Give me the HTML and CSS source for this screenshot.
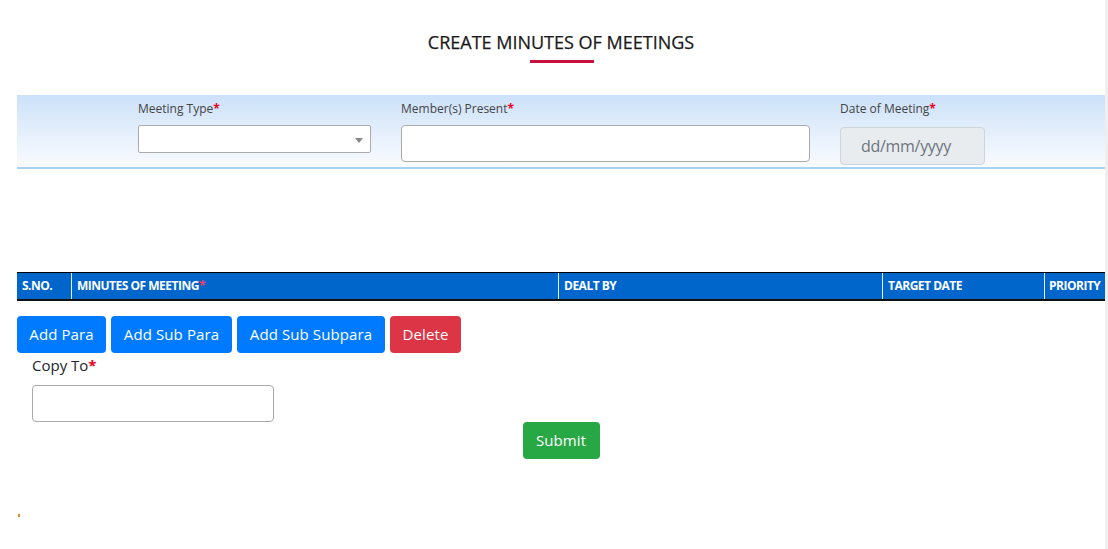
FILE: index.html
```html
<!DOCTYPE html>
<html>
<head>
<meta charset="utf-8">
<link rel="stylesheet" href="styles.css">
</head>
<body>
<div class="page">
  <div class="content">
    <div class="title-wrap">
      <h1 class="title">CREATE MINUTES OF MEETINGS</h1>
      <div class="title-bar"></div>
    </div>

    <div class="filter-panel">
      <div class="field field-type">
        <label class="flabel">Meeting Type<span class="req">*</span></label>
        <div class="select-box"><span class="caret"></span></div>
      </div>
      <div class="field field-members">
        <label class="flabel">Member(s) Present<span class="req">*</span></label>
        <div class="text-box"></div>
      </div>
      <div class="field field-date">
        <label class="flabel">Date of Meeting<span class="req">*</span></label>
        <div class="date-box">dd/mm/yyyy</div>
      </div>
    </div>

    <div class="table-head">
      <div class="th th-sno">S.NO.</div>
      <div class="th th-min">MINUTES OF MEETING<span class="req2">*</span></div>
      <div class="th th-dealt">DEALT BY</div>
      <div class="th th-date">TARGET DATE</div>
      <div class="th th-pri">PRIORITY</div>
    </div>

    <div class="btn-row">
      <button class="btn btn-blue">Add Para</button>
      <button class="btn btn-blue">Add Sub Para</button>
      <button class="btn btn-blue">Add Sub Subpara</button>
      <button class="btn btn-red">Delete</button>
    </div>

    <div class="copy">
      <label class="copy-label">Copy To<span class="req">*</span></label>
      <div class="copy-input"></div>
    </div>

    <div class="submit-row">
      <button class="btn btn-green">Submit</button>
    </div>

    <div class="mark"></div>
  </div>
</div>
</body>
</html>
```

FILE: styles.css
```css
* { box-sizing: border-box; }
html, body { margin: 0; padding: 0; background: #fff; }
body {
  font-family: "Open Sans", "Noto Sans", "Liberation Sans", sans-serif;
  color: #212529;
  width: 1108px;
  height: 549px;
  overflow: hidden;
}
.page {
  width: 1108px;
  height: 549px;
  border-right: 3px solid #efefef;
}
.content {
  margin-left: 17px;
  width: 1088px;
}
.title-wrap {
  padding-top: 30px;
  display: flex;
  flex-direction: column;
  align-items: center;
}
.title {
  margin: 0;
  font-size: 18px;
  font-weight: 400;
  color: #1a1a1a;
  line-height: 24px;
  letter-spacing: 0;
  -webkit-text-stroke: 0.25px #1a1a1a;
}
.title-bar {
  width: 64px;
  height: 3px;
  background: #c8103e;
  margin-top: 6px;
  margin-left: 2px;
}
.filter-panel {
  margin-top: 32px;
  height: 74px;
  background: linear-gradient(to bottom, #cbe1f9 0%, #e6f0fc 55%, #f9fbfe 100%);
  border-bottom: 2px solid #a8d2f0;
  display: flex;
  padding-left: 121px;
  padding-top: 6px;
}
.field { display: flex; flex-direction: column; }
.flabel {
  font-size: 12px;
  line-height: 16px;
  color: #444;
  height: 24px;
}
.req { color: #e8001c; font-weight: 700; }
.field-type { width: 263px; }
.select-box {
  width: 233px;
  height: 28px;
  border: 1px solid #aaa;
  border-radius: 2px;
  background: #fff;
  position: relative;
}
.caret {
  position: absolute;
  right: 7px;
  top: 12px;
  width: 0; height: 0;
  border-left: 4px solid transparent;
  border-right: 4px solid transparent;
  border-top: 5px solid #888;
}
.field-members { width: 439px; }
.text-box {
  width: 409px;
  height: 37px;
  border: 1px solid #aaa;
  border-radius: 4px;
  background: #fff;
}
.field-date { width: 160px; }
.date-box {
  margin-top: 2px;
  width: 145px;
  height: 38px;
  background: #e9ecef;
  border: 1px solid #ced4da;
  border-radius: 4px;
  color: #6c757d;
  font-size: 16px;
  line-height: 36px;
  padding-left: 20px;
  letter-spacing: -0.3px;
}
.table-head {
  margin-top: 103px;
  display: flex;
  width: 1088px;
  height: 29px;
  background: #0066cc;
  border-top: 1px solid #000;
  border-bottom: 2px solid #111;
}
.th {
  color: #fff;
  font-size: 12px;
  font-weight: 700;
  line-height: 26px;
  padding-left: 5px;
  border-left: 1px solid #e8f0fa;
  letter-spacing: -0.5px;
  white-space: nowrap;
}
.th-sno { width: 54px; border-left: none; }
.th-min { width: 487px; }
.th-dealt { width: 324px; }
.th-date { width: 162px; }
.th-pri { width: 61px; padding-left: 4px; }
.req2 { color: #ff3b5c; }
.btn-row {
  margin-top: 15px;
  display: flex;
  gap: 5px;
}
.btn {
  font-family: "Open Sans", "Noto Sans", sans-serif;
  font-size: 15px;
  height: 37px;
  border: none;
  border-radius: 4px;
  color: #fff;
  padding: 0 10px;
  line-height: 37px;
  letter-spacing: 0.1px;
}
.btn-blue { background: #007bff; }
.btn-red { background: #dc3545; }
.btn-green { background: #28a745; }
.btn-row .btn:nth-child(1) { width: 89px; }
.btn-row .btn:nth-child(2) { width: 121px; }
.btn-row .btn:nth-child(3) { width: 148px; }
.btn-row .btn:nth-child(4) { width: 71px; }
.copy {
  padding-left: 15px;
  display: flex;
  flex-direction: column;
}
.copy-label {
  font-size: 15px;
  line-height: 26px;
  margin-top: -1px;
  color: #212529;
}
.copy-input {
  margin-top: 7px;
  width: 242px;
  height: 37px;
  border: 1px solid #aaa;
  border-radius: 4px;
}
.submit-row {
  display: flex;
  justify-content: center;
  margin-top: 0;
}
.submit-row .btn { width: 77px; }
.mark {
  margin-top: 55px;
  margin-left: 1px;
  width: 2px;
  height: 3px;
  background: #d28a2a;
}
```
